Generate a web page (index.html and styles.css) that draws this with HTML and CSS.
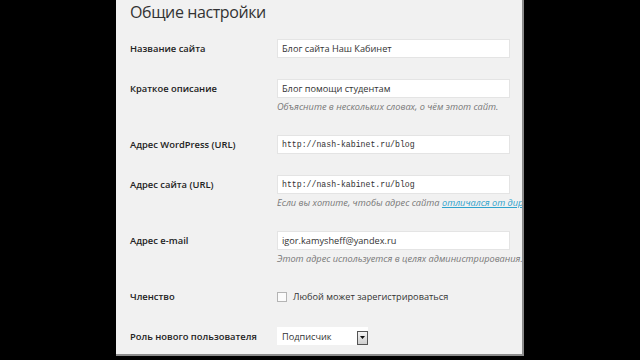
FILE: index.html
```html
<!DOCTYPE html>
<html lang="ru">
<head>
    <meta charset="UTF-8">
    <title>Общие настройки</title>
    <link rel="stylesheet" href="styles.css">
</head>
<body>
    <div class="screen">
        <h1>Общие настройки</h1>
        <form class="form-table">
            <div class="row">
                <label for="blogname">Название сайта</label>
                <div class="field">
                    <input type="text" id="blogname" value="Блог сайта Наш Кабинет">
                </div>
            </div>
            <div class="row">
                <label for="blogdescription">Краткое описание</label>
                <div class="field">
                    <input type="text" id="blogdescription" value="Блог помощи студентам">
                    <p class="description">Объясните в нескольких словах, о чём этот сайт.</p>
                </div>
            </div>
            <div class="row">
                <label for="siteurl">Адрес WordPress (URL)</label>
                <div class="field">
                    <input type="text" id="siteurl" class="code" value="http://nash-kabinet.ru/blog">
                </div>
            </div>
            <div class="row">
                <label for="home">Адрес сайта (URL)</label>
                <div class="field">
                    <input type="text" id="home" class="code" value="http://nash-kabinet.ru/blog">
                    <p class="description">Если вы хотите, чтобы адрес сайта <a href="#">отличался от дир</a></p>
                </div>
            </div>
            <div class="row">
                <label for="admin_email">Адрес e-mail</label>
                <div class="field">
                    <input type="text" id="admin_email" value="igor.kamysheff@yandex.ru">
                    <p class="description">Этот адрес используется в целях администрирования.</p>
                </div>
            </div>
            <div class="row">
                <label>Членство</label>
                <div class="field">
                    <label class="check"><span class="box"></span>Любой может зарегистрироваться</label>
                </div>
            </div>
            <div class="row">
                <label for="default_role">Роль нового пользователя</label>
                <div class="field">
                    <div class="select" id="default_role">
                        <span>Подписчик</span>
                        <span class="arrow"><svg width="5" height="3" viewBox="0 0 5 3"><path d="M0 0h5L2.5 3z" fill="#111"/></svg></span>
                    </div>
                </div>
            </div>
        </form>
    </div>
</body>
</html>
```

FILE: styles.css
```css
:root {
    --panel: #f1f1f1;
    --text: #222;
    --muted: #777;
    --link: #2ea2cc;
}
body {
    margin: 0;
    background: #000;
    font-family: 'Open Sans', sans-serif;
    color: var(--text);
}
.screen {
    width: 392px;
    height: 354px;
    margin-left: 116px;
    padding-left: 14px;
    background: var(--panel);
    border-right: 2px solid #8c8c8c;
    border-bottom: 2px solid #8c8c8c;
    overflow: hidden;
}
h1 {
    margin: 0 0 4px;
    font-size: 16px;
    font-weight: 400;
    letter-spacing: -0.4px;
    line-height: 24px;
    color: #333;
}
.row {
    display: flex;
    padding: 11px 0 10px;
}
.row > label {
    width: 147px;
    flex: none;
    font-size: 9.4px;
    font-weight: 600;
    line-height: 19px;
    color: var(--text);
}
.field {
    white-space: nowrap;
}
input {
    display: block;
    width: 233px;
    height: 19px;
    box-sizing: border-box;
    margin: 0;
    padding: 0 4px;
    border: 1px solid #e4e4e4;
    background: #fff;
    font-family: 'Open Sans', sans-serif;
    font-size: 9.2px;
    color: #333;
}
input.code {
    font-family: 'Liberation Mono', monospace;
    font-size: 8.2px;
}
.description {
    margin: 2px 0 0;
    font-size: 9.2px;
    font-style: italic;
    line-height: 14px;
    color: var(--muted);
}
.description a {
    color: var(--link);
}
.check {
    display: flex;
    align-items: center;
    height: 19px;
    font-size: 9.2px;
    color: #333;
}
.box {
    width: 8px;
    height: 8px;
    margin-right: 6px;
    border: 1px solid #b4b4b4;
    background: #fbfbfb;
}
.select {
    display: flex;
    align-items: center;
    justify-content: space-between;
    width: 91px;
    height: 18px;
    box-sizing: border-box;
    padding-left: 5px;
    background: #fff;
    font-size: 9.2px;
    color: #333;
}
.arrow {
    display: flex;
    align-items: center;
    justify-content: center;
    width: 9px;
    height: 12px;
    margin-top: 3px;
    border: 1px solid #555;
    background: linear-gradient(#f4f4f4, #cfcfcf);
}
```
